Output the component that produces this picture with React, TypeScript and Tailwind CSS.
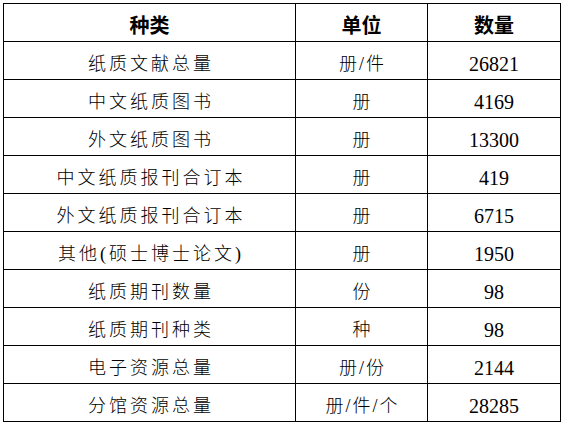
const rows: [string, string, string][] = [
  ["纸质文献总量", "册/件", "26821"],
  ["中文纸质图书", "册", "4169"],
  ["外文纸质图书", "册", "13300"],
  ["中文纸质报刊合订本", "册", "419"],
  ["外文纸质报刊合订本", "册", "6715"],
  ["其他(硕士博士论文)", "册", "1950"],
  ["纸质期刊数量", "份", "98"],
  ["纸质期刊种类", "种", "98"],
  ["电子资源总量", "册/份", "2144"],
  ["分馆资源总量", "册/件/个", "28285"],
];

export default function App() {
  return (
    <div className="w-[566px] h-[425px] bg-white pt-[3px] pl-[3px] font-['Liberation_Serif','Noto_Sans_CJK_SC',serif]">
      <table className="border-collapse text-black">
        <thead>
          <tr className="h-[38px]">
            <th className="w-[292px] border border-black pt-[6px] text-[20px] font-bold">种类</th>
            <th className="w-[132px] border border-black pt-[6px] text-[20px] font-bold">单位</th>
            <th className="w-[133px] border border-black pt-[6px] text-[20px] font-bold">数量</th>
          </tr>
        </thead>
        <tbody>
          {rows.map(([name, unit, qty]) => (
            <tr key={name} className="h-[38px]">
              <td className="border border-black pt-[8px] pl-[3px] text-center text-[18px] font-light tracking-[3px]">
                {name}
              </td>
              <td className="border border-black pt-[8px] pl-[2px] text-center text-[18px] font-light tracking-[2px]">
                {unit}
              </td>
              <td className="border border-black pt-[6px] text-center text-[20px]">
                {qty}
              </td>
            </tr>
          ))}
        </tbody>
      </table>
    </div>
  );
}
